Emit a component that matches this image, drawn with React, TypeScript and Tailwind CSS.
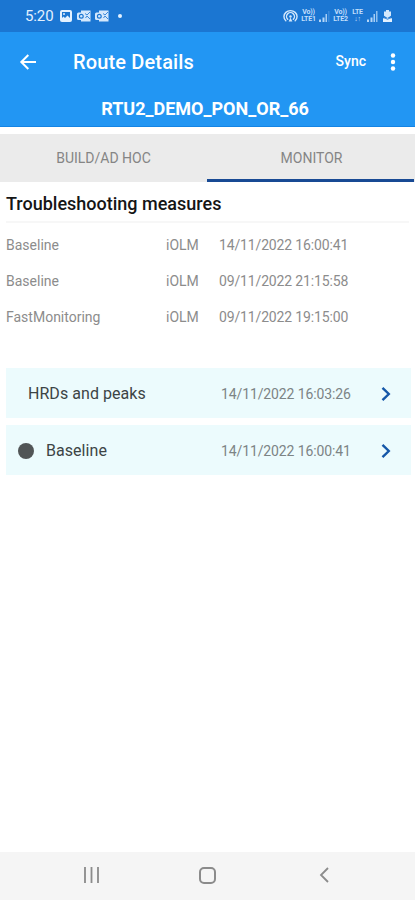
import React from "react";

const measures = [
  { name: "Baseline", type: "iOLM", date: "14/11/2022 16:00:41" },
  { name: "Baseline", type: "iOLM", date: "09/11/2022 21:15:58" },
  { name: "FastMonitoring", type: "iOLM", date: "09/11/2022 19:15:00" },
];

function OutlookIcon() {
  return (
    <svg width="14" height="12" viewBox="0 0 14 12" className="block">
      <path d="M4 .5h9.500V11.500H4z" fill="#d4e8fc" />
      <path d="M8 3.500l2 1.500 3-3M8.500 8l1.500-2 3 3" fill="none" stroke="#3b89da" strokeWidth="1" />
      <rect x="0" y="2.500" width="8" height="7.500" rx="1.500" fill="#d4e8fc" />
      <circle cx="4.300" cy="6.200" r="1.900" fill="none" stroke="#1b76d2" strokeWidth="1.200" />
    </svg>
  );
}

function Signal({ last }: { last: string }) {
  return (
    <svg width="12" height="12" viewBox="0 0 12 12" className="block">
      <path d="M1 9.500h2V12H1zM4.500 7.500h2V12h-2z" fill="#b5d6f7" />
      <path d="M7.500 4h1.500v8H7.500z" fill="#a7cef5" />
      <path d="M10 1h1.500v11H10z" fill={last} />
    </svg>
  );
}

function Volte({ top, bottom }: { top: string; bottom: string }) {
  return (
    <div className="flex w-[15px] flex-col items-center text-[7px] leading-[7px] font-bold tracking-[-0.200px] text-[#c3dffb]">
      <span className="block h-[7px]">{top}</span>
      <span className="block h-[7px]">{bottom}</span>
    </div>
  );
}

function StatusBar() {
  return (
    <div className="flex h-8 items-center bg-[#1b76d2] pl-[25px] text-white">
      <span className="w-[29px] text-[15px] leading-8 tracking-[-0.100px] text-[#e3f1ff]">5:20</span>
      <svg width="12" height="12" viewBox="0 0 12 12" className="ml-[6px] block">
        <rect width="12" height="12" rx="2" fill="#e3f1ff" />
        <path d="M2 2h8v6L7.500 5.500 5 8 3.500 6.500 2 8z" fill="#1b76d2" />
        <circle cx="4" cy="4" r="1" fill="#e3f1ff" />
      </svg>
      <div className="ml-[5px]"><OutlookIcon /></div>
      <div className="ml-[4px]"><OutlookIcon /></div>
      <div className="ml-[9px] size-[4px] rounded-full bg-[#e3f1ff]" />
      <div className="ml-auto flex items-center pr-[23px]">
        <svg width="15" height="14" viewBox="0 0 16 14" className="mr-[3px] block" fill="none" stroke="#d4e8fc" strokeWidth="1.500" strokeLinecap="round">
          <path d="M3 12A7 6.300 0 1 1 13 12" />
          <path d="M5 10.500a4.200 4.200 0 1 1 6 0" />
          <path d="M6 12.800L8 8.500l2 4.300z" fill="#d4e8fc" stroke="none" />
          <circle cx="8" cy="7.500" r="1.300" fill="#d4e8fc" stroke="none" />
        </svg>
        <Volte top="Vo))" bottom="LTE1" />
        <div className="ml-[2px]"><Signal last="#3b89da" /></div>
        <div className="ml-[3px]"><Volte top="Vo))" bottom="LTE2" /></div>
        <div className="ml-[2px]"><Volte top="LTE" bottom="↓↑" /></div>
        <div className="ml-[1px]"><Signal last="#8fc0ef" /></div>
        <svg width="9" height="12" viewBox="0 0 9 12" className="ml-[5px] block">
          <path d="M3 0h3v1.500H8v4.200L4.500 8 1 5.700V1.500H3z" fill="#d4e8fc" />
          <path d="M0 8.300h9V12H0z" fill="#e3f1ff" />
          <path d="M1 7.500l3.500 1.800L8 7.500" fill="none" stroke="#3b89da" />
        </svg>
      </div>
    </div>
  );
}

function Card({ label, date, dot }: { label: string; date: string; dot?: boolean }) {
  return (
    <div className="flex h-[50px] items-center bg-[#ecfbfd] pt-[2px] pl-px">
      <div className="flex w-[214px] items-center">
        {dot ? <div className="mr-[12px] ml-[11px] size-4 rounded-full bg-[#515556]" /> : <div className="w-[21px]" />}
        <span className="pt-px text-[16px] leading-6 tracking-[0.050px] text-[#3c4445]">{label}</span>
      </div>
      <span className="w-[160px] text-[14px] leading-6 tracking-[-0.120px] text-[#7c8485]">{date}</span>
      <svg width="11" height="16" viewBox="0 0 11 16" className="block">
        <path d="M1.500 1.800L7.800 8l-6.300 6.200" fill="none" stroke="#1557a8" strokeWidth="2.400" />
      </svg>
    </div>
  );
}

export default function App() {
  return (
    <main className="flex h-[900px] w-[415px] flex-col overflow-hidden bg-white font-['Roboto',sans-serif]">
      <StatusBar />
      <header className="h-[95px] border-b border-[#1484e4] bg-[#2296f3] text-white">
        <div className="flex h-[59px] items-center">
          <svg width="18" height="18" viewBox="0 0 18 18" className="ml-[19px] block" fill="none" stroke="#fff" strokeWidth="2">
            <path d="M17 9H2.500M9.300 2L2.300 9l7 7" />
          </svg>
          <h1 className="ml-[36px] text-[20px] font-medium tracking-[0.150px]">Route Details</h1>
          <span className="ml-auto text-[14px] font-medium">Sync</span>
          <svg width="6" height="18" viewBox="0 0 6 18" className="mr-[19px] ml-[24px] block" fill="#fff">
            <circle cx="3" cy="2.500" r="2.200" />
            <circle cx="3" cy="9" r="2.200" />
            <circle cx="3" cy="15.500" r="2.200" />
          </svg>
        </div>
        <div className="pr-[5px] text-center text-[18px] leading-[36px] font-bold">RTU2_DEMO_PON_OR_66</div>
      </header>
      <nav className="mt-[7px] flex h-[48px] bg-[#ebebeb] text-[14px] leading-[49px] text-[#858585]">
        <div className="w-[207px] text-center">BUILD/AD HOC</div>
        <div className="w-[207px] border-b-[3px] border-[#184a94] pl-[2px] text-center">MONITOR</div>
      </nav>
      <section className="px-[6px]">
        <h2 className="h-[41px] border-b-2 border-[#f7f7f7] text-[18px] leading-[44px] font-medium text-[#151515]">Troubleshooting measures</h2>
        <div className="pt-1">
          {measures.map((m) => (
            <div key={m.date} className="flex h-[36.300px] items-center text-[14px] text-[#8c8c8c]">
              <span className="w-[160px]">{m.name}</span>
              <span className="w-[53px]">{m.type}</span>
              <span className="tracking-[-0.150px]">{m.date}</span>
            </div>
          ))}
        </div>
      </section>
      <section className="mt-[32px] flex flex-col gap-[7px] pr-[4px] pl-[6px]">
        <Card label="HRDs and peaks" date="14/11/2022 16:03:26" />
        <Card label="Baseline" date="14/11/2022 16:00:41" dot />
      </section>
      <footer className="mt-auto flex h-[48px] items-center bg-[#f5f5f5] pb-[2px] pl-[83px]">
        <svg width="17" height="16" viewBox="0 0 17 16" className="block" stroke="#8b8b8b" strokeWidth="1.800">
          <path d="M2 0v16M8.500 0v16M15 0v16" />
        </svg>
        <div className="ml-[99px] size-[17px] rounded-[5px] border-2 border-[#8b8b8b]" />
        <svg width="10" height="16" viewBox="0 0 10 16" className="ml-[103px] block" fill="none" stroke="#8b8b8b" strokeWidth="1.800">
          <path d="M9 1L2 8l7 7" />
        </svg>
      </footer>
    </main>
  );
}
